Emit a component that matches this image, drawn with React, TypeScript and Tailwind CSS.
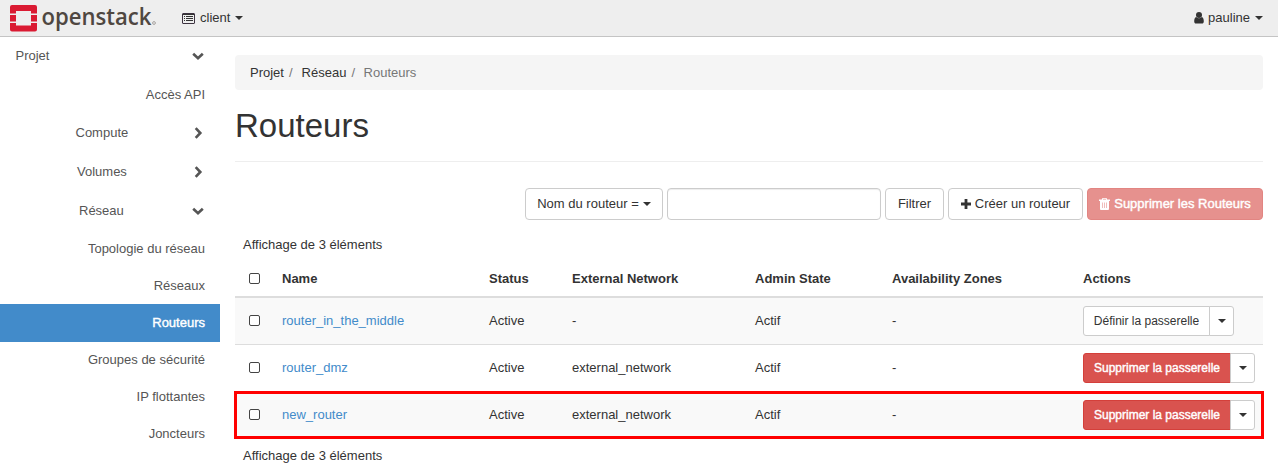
import React from "react";

const Caret = ({ className = "" }: { className?: string }) => (
  <span className={`inline-block border-x-4 border-t-4 border-x-transparent border-t-[#333] ${className}`} />
);

const Logo = () => (
  <svg width="148" height="30" viewBox="0 0 148 30" className="block overflow-visible">
    <g fill="#da1a32">
      <path d="M2 0h23a2 2 0 0 1 2 2v6.500h-6V6H6v2.500H0V2a2 2 0 0 1 2-2z" />
      <path d="M0 10h6v6.500H0zM21 10h6v6.500h-6z" />
      <path d="M0 18h6v2.500h15V18h6v6.500a2 2 0 0 1-2 2H2a2 2 0 0 1-2-2z" />
    </g>
    <text x="31.500" y="19.500" fontSize="22.500" fontFamily="Open Sans, sans-serif" fontWeight="600" fill="#4f4741" textLength="110" lengthAdjust="spacingAndGlyphs">openstack</text>
    <circle cx="144" cy="18" r="1.400" fill="none" stroke="#8a8480" strokeWidth=".7" />
  </svg>
);

const ProjectIcon = () => (
  <svg width="13" height="11" viewBox="0 0 13 11">
    <path d="M1 .5h11a.5.5 0 0 1 .5.5v9a.5.5 0 0 1-.5.5H1a.5.5 0 0 1-.5-.5V1A.5.5 0 0 1 1 .5z" fill="none" stroke="#3d3340" />
    <path d="M1 1h11v1H1z" fill="#333" />
    <path d="M2 3h1v1H2zM2 5h1v1H2zM2 7h1v1H2zM4 3h7v1H4zM4 5h7v1H4zM4 7h7v1H4z" fill="#333" />
  </svg>
);

const UserIcon = () => (
  <svg width="10" height="12" viewBox="0 0 10 12" fill="#333">
    <circle cx="5" cy="3" r="3" />
    <path d="M2.200 5C.8 5.400.2 7 .2 9.200c0 1.500.7 2.400 1.800 2.400h6c1.100 0 1.800-.9 1.800-2.400C9.800 7 9.200 5.400 7.800 5a4 4 0 0 1-5.600 0z" />
  </svg>
);

const TrashIcon = () => (
  <svg width="11" height="12" viewBox="0 0 11 12" fill="#fff">
    <path fillRule="evenodd" d="M3.500 0h4l.7 1.500H11V3H0V1.500h2.800zM4.200.8l-.4.700h3.400l-.4-.7z" />
    <path fillRule="evenodd" d="M1 3h9v7.700c0 .7-.5 1.300-1.200 1.300H2.200C1.500 12 1 11.400 1 10.700zM3 4.500v5.500h.6V4.500zM5.200 4.500v5.500h.6V4.500zM7.400 4.500v5.500H8V4.500z" />
  </svg>
);

const PlusIcon = () => (
  <svg width="10" height="10" viewBox="0 0 10 10" fill="#333">
    <path d="M3.600 0h2.800v3.600H10v2.800H6.400V10H3.600V6.400H0V3.600h3.600z" />
  </svg>
);

const Chevron = ({ open }: { open?: boolean }) => (
  <svg width="12" height="12" viewBox="0 0 12 12" fill="none" stroke="#555" strokeWidth="2.600">
    <path d={open ? "M1.200 3.700 6 8.300l4.800-4.600" : "M3.700 1.200 8.300 6l-4.600 4.800"} />
  </svg>
);

const Group = ({ label, open, cls }: { label: string; open?: boolean; cls: string }) => (
  <div className={`flex items-center justify-between pr-4 text-[#555] ${cls}`}>
    <span>{label}</span>
    <Chevron open={open} />
  </div>
);

const Leaf = ({ label, active }: { label: string; active?: boolean }) => (
  <div className={`-mb-px flex h-[38px] shrink-0 items-center justify-end pr-[15px] ${active ? "bg-[#428bca] text-white [-webkit-text-stroke:0.4px_#fff]" : "text-[#555]"}`}>
    {label}
  </div>
);

const Check = () => <span className="block size-[11px] rounded-[2px] border border-[#444] bg-white" />;

const cols = "grid grid-cols-[47px_207px_83px_183px_137px_191px_1fr] items-center";

const rows = [
  { name: "router_in_the_middle", net: "-", set: true },
  { name: "router_dmz", net: "external_network" },
  { name: "new_router", net: "external_network" },
];

export default function App() {
  return (
    <div className="flex h-[463px] w-[1278px] flex-col overflow-hidden bg-white font-['Liberation_Sans',Arial,sans-serif] text-[13px] leading-[18px] text-[#333]">
      <header className="flex h-[37px] shrink-0 items-center border-b border-[#c4c4c4] bg-[#eee]">
        <div className="ml-2.5 w-[172px] pt-[3px]"><Logo /></div>
        <ProjectIcon />
        <span className="ml-[5px]">client</span>
        <Caret className="ml-[5px]" />
        <div className="ml-auto flex items-center pr-[15px]">
          <UserIcon />
          <span className="ml-1">pauline</span>
          <Caret className="ml-[5px]" />
        </div>
      </header>
      <div className="flex min-h-0 flex-1">
        <nav className="w-[220px] shrink-0">
          <Group label="Projet" open cls="h-[38px] pl-[15.5px]" />
          <div className="h-px" />
          <Leaf label="Accès API" />
          <Group label="Compute" cls="h-[39px] pl-[75.5px]" />
          <Group label="Volumes" cls="h-[39px] pl-[77px]" />
          <div className="h-px" />
          <Group label="Réseau" open cls="h-[38px] pl-[79px]" />
          <Leaf label="Topologie du réseau" />
          <Leaf label="Réseaux" />
          <Leaf label="Routeurs" active />
          <Leaf label="Groupes de sécurité" />
          <Leaf label="IP flottantes" />
          <Leaf label="Joncteurs" />
        </nav>
        <main className="ml-[15px] w-[1028px] pt-[18px]">
          <div className="flex h-[35px] items-center rounded bg-[#f5f5f5] pl-[15px]">
            <span>Projet</span>
            <span className="ml-[5px] mr-[9px] text-[#777]">/</span>
            <span>Réseau</span>
            <span className="ml-[5px] mr-[8.5px] text-[#777]">/</span>
            <span className="text-[#777]">Routeurs</span>
          </div>
          <h1 className="mt-[17px] h-[55px] border-b border-[#eee] text-[33px] leading-[37px]">Routeurs</h1>
          <div className="mt-[26px] flex h-8 justify-end gap-1">
            <button className="flex w-[138px] items-center justify-center rounded border border-[#ccc]">Nom du routeur =<Caret className="ml-1" /></button>
            <input className="w-[214px] rounded border border-[#ccc] shadow-[inset_0_1px_1px_rgba(0,0,0,0.075)]" />
            <button className="w-[59px] rounded border border-[#ccc]">Filtrer</button>
            <button className="flex w-[135px] items-center justify-center gap-1 rounded border border-[#ccc]"><PlusIcon />Créer un routeur</button>
            <button className="flex w-44 items-center justify-center gap-1 rounded border border-[#e28582] bg-[#e6918e] text-white [-webkit-text-stroke:0.4px_#fff]"><TrashIcon />Supprimer les Routeurs</button>
          </div>
          <div className="mt-[16px] pl-2">Affichage de 3 éléments</div>
          <div className={`${cols} mt-[6px] h-9 pt-px font-bold`}>
            <span className="pl-3.5"><Check /></span>
            <span>Name</span><span>Status</span><span>External Network</span><span>Admin State</span><span>Availability Zones</span><span>Actions</span>
          </div>
          <div className="h-0.5 bg-[#ddd]" />
          {rows.map((r, i) => (
            <div key={r.name} className={`relative h-[47px] ${i % 2 ? "bg-white" : "bg-[#f9f9f9]"}`}>
              <div className={`${cols} h-[47px] border-b border-[#ddd]`}>
                <span className="pb-0.5 pl-3.5"><Check /></span>
                <a className="text-[#428bca]">{r.name}</a>
                <span>Active</span><span>{r.net}</span><span>Actif</span><span>-</span>
                <div className="flex h-[30px] text-xs">
                  {r.set ? (
                    <button className="w-[127px] rounded-l-[3px] border border-[#ccc] bg-white">Définir la passerelle</button>
                  ) : (
                    <button className="w-[148px] whitespace-nowrap rounded-l-[3px] border border-[#d43f3a] bg-[#d9534f] text-white [-webkit-text-stroke:0.4px_#fff]">Supprimer la passerelle</button>
                  )}
                  <button className="-ml-px flex w-[25px] items-center justify-center rounded-r-[3px] border border-[#ccc] bg-white"><Caret /></button>
                </div>
              </div>
              {i === 2 && <div className="absolute -left-px -top-px h-12 w-[1030px] border-3 border-[#f00]" />}
            </div>
          ))}
          <div className="mt-[8px] pl-2">Affichage de 3 éléments</div>
        </main>
      </div>
    </div>
  );
}
